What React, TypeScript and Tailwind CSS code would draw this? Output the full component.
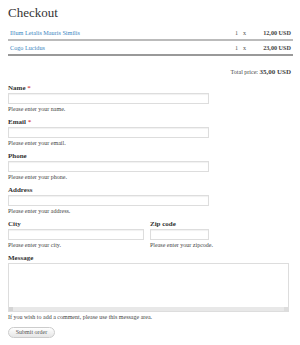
import React from 'react';

type Item = { name: string; qty: number; price: string };

const items: Item[] = [
  { name: 'Illum Letalis Mauris Similis', qty: 1, price: '12,00 USD' },
  { name: 'Cogo Lucidus', qty: 1, price: '23,00 USD' },
];

const Field: React.FC<{ label: string; required?: boolean; help: string; width: string }> = ({ label, required, help, width }) => (
  <div className="flex flex-col">
    <label className="h-[9px] text-[7px] leading-[9px] font-bold text-[#333]">
      {label}
      {required && <span className="text-[#c00] font-normal"> *</span>}
    </label>
    <input
      type="text"
      className={`${width} h-[11px] border border-[#ddd] bg-white shadow-[inset_0_1px_1px_rgba(0,0,0,0.06)] outline-none`}
    />
    <p className="mt-[1px] h-[8px] text-[6px] leading-[8px] text-[#444]">{help}</p>
  </div>
);

export default function App() {
  return (
    <div className="w-[300px] h-[345px] bg-white px-[8px] pt-[5px] text-[#333]" style={{ fontFamily: '"Liberation Serif", serif' }}>
      <h1 className="text-[13px] leading-[15px] text-[#333]">Checkout</h1>

      <div className="mt-[6px] w-[285px]">
        {items.map((it, i) => (
          <div
            key={it.name}
            className={`flex items-center h-[15px] border-b-2 ${i === 0 ? 'border-[#bbb]' : 'border-[#999]'} text-[6.2px]`}
          >
            <a className="flex-1 pl-[2px] text-[#3a85c0]">{it.name}</a>
            <span className="w-[8px] text-[#555]">{it.qty}</span>
            <span className="w-[18px] text-[#555]">x</span>
            <span className="w-[32px] pr-[2px] text-right font-bold text-[#444]">{it.price}</span>
          </div>
        ))}
      </div>

      <div className="mt-[12px] w-[285px] pr-[2px] text-right text-[6px] leading-[8px] text-[#444]">
        Total price: <span className="font-bold text-[7px]">35,00 USD</span>
      </div>

      <form className="mt-[8px] flex flex-col gap-[5px]">
        <Field label="Name" required help="Please enter your name." width="w-[201px]" />
        <Field label="Email" required help="Please enter your email." width="w-[201px]" />
        <Field label="Phone" help="Please enter your phone." width="w-[201px]" />
        <Field label="Address" help="Please enter your address." width="w-[201px]" />
        <div className="flex gap-[6px]">
          <Field label="City" help="Please enter your city." width="w-[136px]" />
          <Field label="Zip code" help="Please enter your zipcode." width="w-[59px]" />
        </div>
        <div className="flex flex-col">
          <label className="h-[9px] text-[7px] leading-[9px] font-bold text-[#333]">Message</label>
          <div className="w-[281px] border border-[#ddd] bg-white">
            <textarea className="block w-full h-[43px] resize-none outline-none" />
            <div className="relative h-[4px] bg-[#e8e8e8]">
              <div className="absolute left-0 top-0 h-[4px] w-[4px] bg-[#d4d4d4]" />
              <div className="absolute right-0 top-0 h-[4px] w-[4px] bg-[#ddd]" />
            </div>
          </div>
          <p className="mt-[1px] h-[8px] text-[6px] leading-[8px] text-[#444]">
            If you wish to add a comment, please use this message area.
          </p>
          <button
            type="button"
            className="mt-[6px] w-[47px] h-[11px] rounded-full border border-[#ccc] bg-gradient-to-b from-white to-[#e6e6e6] text-[6px] leading-[9px] text-[#555]"
          >
            Submit order
          </button>
        </div>
      </form>
    </div>
  );
}
